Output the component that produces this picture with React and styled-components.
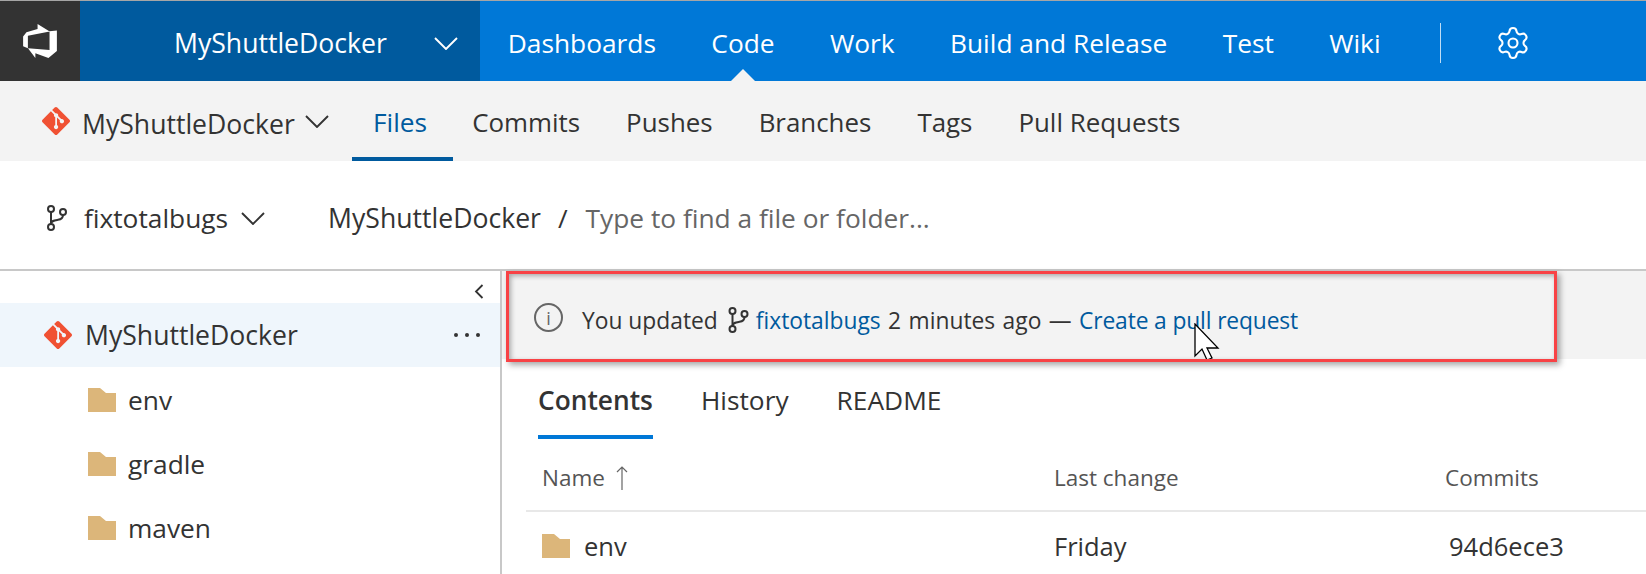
import React from 'react';
import styled, { createGlobalStyle } from 'styled-components';
import { Settings } from 'lucide-react';

const GlobalStyle = createGlobalStyle`
  html, body {
    margin: 0;
    padding: 0;
    background: #fff;
    overflow: hidden;
  }
  body {
    font-family: "Open Sans", "Noto Sans", "Liberation Sans", sans-serif;
    color: #333;
  }
`;

const hubs = [
  { label: 'Dashboards' },
  { label: 'Code', active: true },
  { label: 'Work' },
  { label: 'Build and Release' },
  { label: 'Test' },
  { label: 'Wiki' },
];
const pivots = ['Commits', 'Pushes', 'Branches', 'Tags', 'Pull Requests'];
const folders = ['env', 'gradle', 'maven'];

function Chevron({ width = 24, height = 13, color = '#333' }) {
  return (
    <svg width={width} height={height} viewBox="0 0 24 13" fill="none" preserveAspectRatio="none">
      <path d="M1 1l11 11L23 1" stroke={color} strokeWidth="1.9" />
    </svg>
  );
}

function GitDiamond() {
  return (
    <svg width="28" height="28" viewBox="0 0 24 24">
      <path
        fill="#f05133"
        d="M23.546 10.93L13.067.452c-.604-.603-1.582-.603-2.188 0L8.708 2.627l2.76 2.76c.645-.215 1.379-.07 1.889.441.516.515.658 1.258.438 1.9l2.658 2.66c.645-.223 1.387-.078 1.9.435.721.72.721 1.884 0 2.604-.719.719-1.881.719-2.6 0-.539-.541-.674-1.337-.404-1.996L12.86 8.955v6.525c.176.086.342.203.488.348.713.721.713 1.883 0 2.6-.719.721-1.889.721-2.609 0-.719-.719-.719-1.879 0-2.598.182-.18.387-.316.605-.406V8.835c-.217-.091-.424-.222-.6-.401-.545-.545-.676-1.342-.396-2.009L7.636 3.7.45 10.881c-.6.605-.6 1.584 0 2.189l10.48 10.477c.604.604 1.582.604 2.186 0l10.43-10.43c.605-.603.605-1.582 0-2.187"
      />
    </svg>
  );
}

function BranchIcon({ width = 21, height = 26 }) {
  return (
    <svg width={width} height={height} viewBox="0 0 21 26" fill="none" stroke="#333" strokeWidth="2">
      <circle cx="5" cy="4" r="3" />
      <circle cx="5" cy="22" r="3" />
      <circle cx="17" cy="7" r="3" />
      <path d="M5 7v12" />
      <path d="M17 10c0 3-2 4.4-5 4.8-3.500.5-7 .7-7 4.200" />
    </svg>
  );
}

function FolderIcon() {
  return (
    <svg width="28" height="24" viewBox="0 0 28 24">
      <path fill="#dcb67a" d="M0 0h12l6 5h10v19H0z" />
    </svg>
  );
}

const Page = styled.div`
  width: 1646px;
  height: 574px;
  overflow: hidden;
  border-top: 1px solid #a6a6a6;
  box-sizing: border-box;
`;

const TopBar = styled.header`
  display: flex;
  height: 80px;
  background: #0078d7;
  color: #fff;
`;

const LogoTile = styled.div`
  width: 80px;
  display: flex;
  align-items: center;
  justify-content: center;
  background: #333;
`;

const ProjectPicker = styled.div`
  width: 400px;
  box-sizing: border-box;
  padding: 4px 22px 0 94px;
  display: flex;
  align-items: center;
  justify-content: space-between;
  background: #005a9e;
`;

const ProjectName = styled.span`
  font-size: 26.600px;
  line-height: 1;
`;

const HubList = styled.nav`
  display: flex;
  align-items: stretch;
`;

const Hub = styled.a`
  position: relative;
  display: flex;
  align-items: center;
  padding: 4px 27.700px 0;
  font-size: 26.300px;
  ${(p) =>
    p.$active &&
    `&::after {
      content: '';
      position: absolute;
      left: 50%;
      bottom: 0;
      margin-left: -12px;
      border-left: 12px solid transparent;
      border-right: 12px solid transparent;
      border-bottom: 12px solid #f3f3f3;
    }`}
`;

const Divider = styled.div`
  width: 1px;
  height: 40px;
  margin: 22px 0 0 32px;
  background: rgba(255, 255, 255, 0.75);
`;

const GearButton = styled.div`
  display: flex;
  align-items: center;
  margin-left: 54px;
  padding-top: 4px;
`;

const SubBar = styled.div`
  display: flex;
  align-items: stretch;
  height: 80px;
  background: #f3f3f3;
`;

const RepoPicker = styled.div`
  display: flex;
  align-items: center;
  gap: 12px;
  width: 352px;
  box-sizing: border-box;
  padding-left: 42px;
`;

const RepoName = styled.span`
  margin: 6px -2px 0 0;
  font-size: 26.600px;
`;

const Pivot = styled.a`
  display: flex;
  align-items: center;
  padding: 6px 23px 0;
  font-size: 25.900px;
  color: #333;
  border-bottom: 4px solid transparent;
  box-sizing: border-box;
`;

const ActivePivot = styled(Pivot)`
  padding: 6px 26px 0 21px;
  margin-right: -4px;
  font-size: 26.300px;
  color: #005a9e;
  border-bottom-color: #005a9e;
`;

const PathBar = styled.div`
  display: flex;
  align-items: center;
  height: 110px;
  box-sizing: border-box;
  padding: 6px 0 0 46px;
  border-bottom: 2px solid #c8c8c8;
  font-size: 26.300px;
`;

const BranchName = styled.span`
  margin: 0 13px 0 17px;
`;

const PathRoot = styled.span`
  margin-left: 63px;
  font-size: 26.600px;
`;

const PathSlash = styled.span`
  margin: 0 18px 0 17px;
`;

const PathInput = styled.span`
  color: #666;
`;

const Body = styled.div`
  display: flex;
  height: 303px;
`;

const Sidebar = styled.aside`
  width: 500px;
  flex: none;
  border-right: 2px solid #c8c8c8;
`;

const CollapseRow = styled.div`
  display: flex;
  align-items: center;
  justify-content: flex-end;
  height: 32px;
  padding: 8px 16px 0 0;
  box-sizing: border-box;
`;

const RepoRow = styled.div`
  display: flex;
  align-items: center;
  gap: 13px;
  height: 64px;
  margin-bottom: 1px;
  padding: 0 20px 0 44px;
  background: #eff6fc;
  font-size: 26.600px;
`;

const Dots = styled.span`
  margin-left: auto;
  display: flex;
  gap: 7px;
  i {
    width: 4px;
    height: 4px;
    border-radius: 50%;
    background: #333;
  }
`;

const FolderRow = styled.div`
  display: flex;
  align-items: center;
  gap: 12px;
  height: 64px;
  padding-left: 88px;
  font-size: 26.300px;
`;

const Main = styled.main`
  flex: 1;
  min-width: 0;
`;

const Banner = styled.div`
  position: relative;
  display: flex;
  align-items: center;
  height: 88px;
  box-sizing: border-box;
  padding: 10px 0 0 32px;
  background: #f3f3f3;
  font-size: 22.800px;
  white-space: pre;
`;

const InfoIcon = styled.span`
  display: flex;
  align-items: center;
  justify-content: center;
  width: 29px;
  height: 29px;
  box-sizing: border-box;
  margin: -5px 19px 0 0;
  border: 2px solid #666;
  border-radius: 50%;
  font-size: 18px;
  color: #666;
`;

const BannerBranch = styled.span`
  display: flex;
  margin: 0 7px 0 9px;
`;

const BannerLink = styled.a`
  color: #005a9e;
`;

const PullRequestLink = styled(BannerLink)`
  letter-spacing: -0.130px;
`;

const BannerMeta = styled.span`
  word-spacing: 1.500px;
`;

const Highlight = styled.div`
  position: absolute;
  left: 4px;
  top: 0;
  width: 1051px;
  height: 91px;
  box-sizing: border-box;
  border: 3px solid #f84245;
  box-shadow: 3px 3px 6px rgba(0, 0, 0, 0.35), inset 2px 2px 5px rgba(0, 0, 0, 0.3);
  pointer-events: none;
`;

const Cursor = styled.svg`
  position: absolute;
  left: 692px;
  top: 52px;
`;

const Tabs = styled.div`
  display: flex;
  gap: 48px;
  height: 80px;
  padding: 3px 0 0 36px;
  box-sizing: border-box;
  font-size: 26.300px;
`;

const Tab = styled.a`
  display: flex;
  align-items: center;
  height: 77px;
  padding-top: 2px;
  box-sizing: border-box;
  font-weight: ${(p) => (p.$active ? 600 : 400)};
  border-bottom: 4px solid ${(p) => (p.$active ? '#0078d7' : 'transparent')};
`;

const Table = styled.div`
  margin-left: 24px;
`;

const HeadRow = styled.div`
  display: grid;
  grid-template-columns: 512px 391px 1fr;
  align-items: center;
  height: 73px;
  box-sizing: border-box;
  padding: 6px 0 0 16px;
  border-bottom: 2px solid #e8e8e8;
  font-size: 22.500px;
  color: #555;
`;

const NameHead = styled.span`
  display: flex;
  align-items: center;
  gap: 11px;
`;

const FileRow = styled.div`
  display: grid;
  grid-template-columns: 512px 391px 1fr;
  align-items: center;
  height: 68px;
  padding-left: 16px;
  font-size: 25.500px;
`;

const FileName = styled.span`
  display: flex;
  align-items: center;
  gap: 14px;
`;

const Hash = styled.span`
  padding-left: 4px;
`;

export default function App() {
  return (
    <Page>
      <GlobalStyle />
      <TopBar>
        <LogoTile>
          <svg width="38" height="38" viewBox="0 0 18 18">
            <path
              fill="#fff"
              d="M17 4v9.740l-4 3.280-6.200-2.260V17l-3.510-4.590 10.230.8V4.440L17 4zm-3.410.49L7.850 1v2.290L2.580 4.840 1 6.870v4.610l2.260 1V6.570l10.330-2.080z"
            />
          </svg>
        </LogoTile>
        <ProjectPicker>
          <ProjectName>MyShuttleDocker</ProjectName>
          <Chevron color="#fff" />
        </ProjectPicker>
        <HubList>
          {hubs.map((hub) => (
            <Hub key={hub.label} $active={hub.active}>
              {hub.label}
            </Hub>
          ))}
        </HubList>
        <Divider />
        <GearButton>
          <Settings size={36} strokeWidth={1.4} color="#fff" />
        </GearButton>
      </TopBar>

      <SubBar>
        <RepoPicker>
          <GitDiamond />
          <RepoName>MyShuttleDocker</RepoName>
          <Chevron />
        </RepoPicker>
        <ActivePivot>Files</ActivePivot>
        {pivots.map((pivot) => (
          <Pivot key={pivot}>{pivot}</Pivot>
        ))}
      </SubBar>

      <PathBar>
        <BranchIcon />
        <BranchName>fixtotalbugs</BranchName>
        <Chevron />
        <PathRoot>MyShuttleDocker</PathRoot>
        <PathSlash>/</PathSlash>
        <PathInput>Type to find a file or folder...</PathInput>
      </PathBar>

      <Body>
        <Sidebar>
          <CollapseRow>
            <svg width="10" height="15" viewBox="0 0 10 15" fill="none">
              <path d="M8.500 1L2 7.500 8.500 14" stroke="#333" strokeWidth="1.800" />
            </svg>
          </CollapseRow>
          <RepoRow>
            <GitDiamond />
            MyShuttleDocker
            <Dots>
              <i />
              <i />
              <i />
            </Dots>
          </RepoRow>
          {folders.map((folder) => (
            <FolderRow key={folder}>
              <FolderIcon />
              {folder}
            </FolderRow>
          ))}
        </Sidebar>

        <Main>
          <Banner>
            <InfoIcon>i</InfoIcon>
            You updated
            <BannerBranch>
              <BranchIcon width={22} height={26} />
            </BannerBranch>
            <BannerLink>fixtotalbugs</BannerLink>
            <BannerMeta>{' 2 minutes ago — '}</BannerMeta>
            <PullRequestLink>Create a pull request</PullRequestLink>
            <Cursor width="26" height="38" viewBox="0 0 26 38">
              <path
                d="M1 1v32l7-7 5 11 5-2-5-10h11z"
                fill="#fff"
                stroke="#000"
                strokeWidth="1.300"
              />
            </Cursor>
            <Highlight />
          </Banner>
          <Tabs>
            <Tab $active>Contents</Tab>
            <Tab>History</Tab>
            <Tab>README</Tab>
          </Tabs>
          <Table>
            <HeadRow>
              <NameHead>
                Name
                <svg width="12" height="24" viewBox="0 0 12 24" fill="none">
                  <path d="M6 24V1M1 6l5-5 5 5" stroke="#666" strokeWidth="1.200" />
                </svg>
              </NameHead>
              <span>Last change</span>
              <span>Commits</span>
            </HeadRow>
            <FileRow>
              <FileName>
                <FolderIcon />
                env
              </FileName>
              <span>Friday</span>
              <Hash>94d6ece3</Hash>
            </FileRow>
          </Table>
        </Main>
      </Body>
    </Page>
  );
}
